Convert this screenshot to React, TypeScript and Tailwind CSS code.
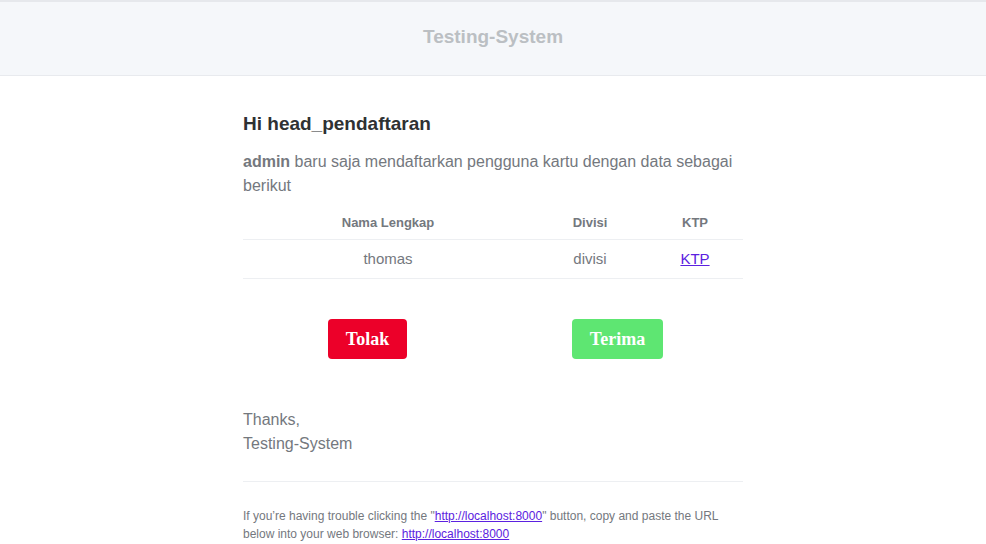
export default function App() {
  const rows = [{ nama: "thomas", divisi: "divisi" }];

  return (
    <div className="min-h-screen bg-white font-['Liberation_Sans',Arial,sans-serif] text-[#74787e]">
      {/* Header */}
      <div className="h-[76px] bg-[#f5f7fa] border-t-2 border-t-[#e6e8ec] border-b border-b-[#e8eaee] flex items-center justify-center">
        <span className="text-[19px] font-bold text-[#bbbfc3] leading-[25px] -mt-[5px]">Testing-System</span>
      </div>

      {/* Body */}
      <div className="w-[500px] mx-auto pt-[37px]">
        <h1 className="text-[19px] leading-[22px] font-bold text-[#2f3133] mb-[15px]">Hi head_pendaftaran</h1>
        <p className="text-[16px] leading-6 mb-4">
          <strong className="font-bold">admin</strong> baru saja mendaftarkan pengguna kartu dengan data sebagai berikut
        </p>

        {/* Table */}
        <div className="grid grid-cols-[290px_114px_96px] text-center">
          <div className="text-[13px] leading-[18px] font-bold pb-[7px] border-b border-[#edeff2]">Nama Lengkap</div>
          <div className="text-[13px] leading-[18px] font-bold pb-[7px] border-b border-[#edeff2]">Divisi</div>
          <div className="text-[13px] leading-[18px] font-bold pb-[7px] border-b border-[#edeff2]">KTP</div>
          {rows.map((r) => (
            <>
              <div key={r.nama + "n"} className="text-[15px] leading-[18px] py-[10px] border-b border-[#edeff2]">{r.nama}</div>
              <div key={r.nama + "d"} className="text-[15px] leading-[18px] py-[10px] border-b border-[#edeff2]">{r.divisi}</div>
              <div key={r.nama + "k"} className="text-[15px] leading-[18px] py-[10px] border-b border-[#edeff2]">
                <a href="#" className="underline text-[#5b21e0]">KTP</a>
              </div>
            </>
          ))}
        </div>

        {/* Buttons */}
        <div className="grid grid-cols-2 mt-[40px]">
          <div className="flex justify-center pr-px">
            <button className="w-[79px] h-10 rounded bg-[#ec0029] text-white font-['Liberation_Serif',serif] font-bold text-[18px]">
              Tolak
            </button>
          </div>
          <div className="flex justify-center pr-px">
            <button className="w-[91px] h-10 rounded bg-[#5ee672] text-white font-['Liberation_Serif',serif] font-bold text-[18px]">
              Terima
            </button>
          </div>
        </div>

        <p className="text-[16px] leading-6 mt-[49px]">
          Thanks,
          <br />
          Testing-System
        </p>

        {/* Subcopy */}
        <div className="mt-[25px] border-t border-[#edeff2] pt-[25px]">
          <p className="text-[12px] leading-[18px]">
            If you’re having trouble clicking the "<a href="#" className="underline text-[#5b21e0]">http://localhost:8000</a>" button, copy and paste the URL below into your web browser:{" "}
            <a href="#" className="underline text-[#5b21e0]">http://localhost:8000</a>
          </p>
        </div>
      </div>
    </div>
  );
}
